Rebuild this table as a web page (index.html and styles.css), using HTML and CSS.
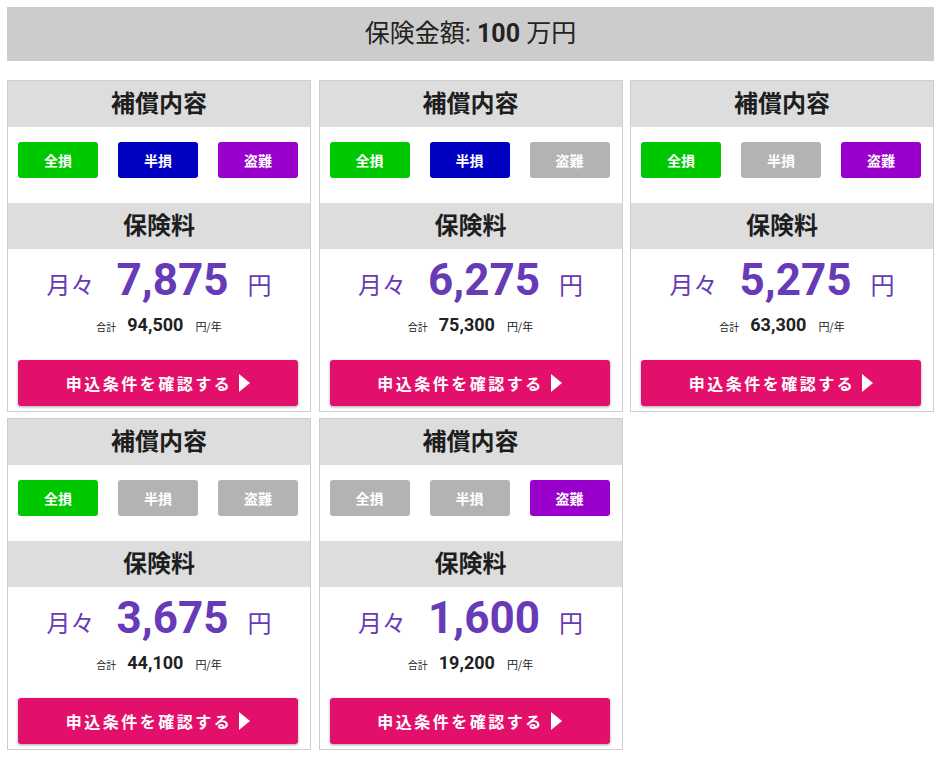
FILE: index.html
```
<!DOCTYPE html>
<html lang="ja">
<head>
<meta charset="utf-8">
<link rel="stylesheet" href="styles.css">
</head>
<body>
<div class="banner">保険金額: <b>100</b> 万円</div>
<div class="grid">
  <div class="card">
    <div class="head">補償内容</div>
    <div class="tags"><span class="tag green">全損</span><span class="tag blue">半損</span><span class="tag purple">盗難</span></div>
    <div class="head">保険料</div>
    <div class="price"><span class="unit">月々</span><span class="num">7,875</span><span class="unit">円</span></div>
    <div class="total"><span class="tl">合計</span><span class="tn">94,500</span><span class="ty">円/年</span></div>
    <div class="ctaw"><a class="cta">申込条件を確認する<i class="tri"></i></a></div>
  </div>
  <div class="card">
    <div class="head">補償内容</div>
    <div class="tags"><span class="tag green">全損</span><span class="tag blue">半損</span><span class="tag off">盗難</span></div>
    <div class="head">保険料</div>
    <div class="price"><span class="unit">月々</span><span class="num">6,275</span><span class="unit">円</span></div>
    <div class="total"><span class="tl">合計</span><span class="tn">75,300</span><span class="ty">円/年</span></div>
    <div class="ctaw"><a class="cta">申込条件を確認する<i class="tri"></i></a></div>
  </div>
  <div class="card">
    <div class="head">補償内容</div>
    <div class="tags"><span class="tag green">全損</span><span class="tag off">半損</span><span class="tag purple">盗難</span></div>
    <div class="head">保険料</div>
    <div class="price"><span class="unit">月々</span><span class="num">5,275</span><span class="unit">円</span></div>
    <div class="total"><span class="tl">合計</span><span class="tn">63,300</span><span class="ty">円/年</span></div>
    <div class="ctaw"><a class="cta">申込条件を確認する<i class="tri"></i></a></div>
  </div>
  <div class="card">
    <div class="head">補償内容</div>
    <div class="tags"><span class="tag green">全損</span><span class="tag off">半損</span><span class="tag off">盗難</span></div>
    <div class="head">保険料</div>
    <div class="price"><span class="unit">月々</span><span class="num">3,675</span><span class="unit">円</span></div>
    <div class="total"><span class="tl">合計</span><span class="tn">44,100</span><span class="ty">円/年</span></div>
    <div class="ctaw"><a class="cta">申込条件を確認する<i class="tri"></i></a></div>
  </div>
  <div class="card">
    <div class="head">補償内容</div>
    <div class="tags"><span class="tag off">全損</span><span class="tag off">半損</span><span class="tag purple">盗難</span></div>
    <div class="head">保険料</div>
    <div class="price"><span class="unit">月々</span><span class="num">1,600</span><span class="unit">円</span></div>
    <div class="total"><span class="tl">合計</span><span class="tn">19,200</span><span class="ty">円/年</span></div>
    <div class="ctaw"><a class="cta">申込条件を確認する<i class="tri"></i></a></div>
  </div>
</div>
</body>
</html>
```

FILE: styles.css
```
* { box-sizing: border-box; }
body {
  margin: 7px;
  background: #fff;
  font-family: Roboto, "Noto Sans CJK JP", sans-serif;
  color: #222;
}
.banner {
  background: #cccccc;
  height: 54px;
  line-height: 54px;
  text-align: center;
  font-family: Roboto, "Noto Sans CJK JP", sans-serif;
  font-size: 25px;
  color: #222;
  margin-bottom: 19px;
  width: 927px;
}
.banner b { font-weight: 700; }
.grid {
  display: grid;
  grid-template-columns: repeat(3, 304px);
  column-gap: 7.5px;
  row-gap: 6px;
  width: 927px;
}
.card {
  border: 1px solid #cfcfcf;
  background: #fff;
}
.head {
  background: #dddddd;
  height: 46px;
  display: flex;
  align-items: center;
  justify-content: center;
  padding-bottom: 5px;
  font-family: "Noto Sans CJK JP", sans-serif;
  font-weight: 700;
  font-size: 24px;
  color: #1e1e1e;
}
.tags {
  display: flex;
  justify-content: space-between;
  padding: 15px 12px 25px 10px;
}
.tag {
  width: 80px;
  height: 36px;
  border-radius: 3px;
  display: flex;
  align-items: center;
  justify-content: center;
  color: #fff;
  font-family: "Noto Sans CJK JP", sans-serif;
  font-weight: 700;
  font-size: 14px;
}
.green { background: #00c800; }
.blue { background: #0000c0; }
.purple { background: #9900cc; }
.off { background: #b3b3b3; }
.price {
  display: flex;
  justify-content: center;
  align-items: center;
  height: 60px;
  color: #673ab7;
  padding-top: 2px;
}
.unit {
  font-family: "Noto Sans CJK JP", sans-serif;
  font-size: 24px;
  font-weight: 400;
  margin-top: 6px;
}
.num {
  font-family: Roboto, sans-serif;
  font-weight: 700;
  font-size: 44px;
  margin: 0 19px 0 22px;
}
.total {
  display: flex;
  justify-content: center;
  align-items: baseline;
  height: 32px;
  padding-top: 5px;
  color: #222;
}
.tl { font-family: "Noto Sans CJK JP", sans-serif; font-size: 10px; }
.tn { font-family: Roboto, sans-serif; font-weight: 700; font-size: 18px; margin: 0 12px 0 11px; }
.ty { font-family: "Noto Sans CJK JP", sans-serif; font-size: 11px; }
.ctaw { padding: 19px 12px 5px 10px; }
.cta {
  display: flex;
  align-items: center;
  justify-content: center;
  height: 46px;
  background: #e3106b;
  border-radius: 3px;
  box-shadow: 0 1px 3px rgba(0,0,0,0.35);
  color: #fff;
  font-family: "Noto Sans CJK JP", sans-serif;
  font-weight: 700;
  font-size: 16px;
  letter-spacing: 2.5px;
}
.tri {
  display: inline-block;
  width: 0;
  height: 0;
  border-top: 9px solid transparent;
  border-bottom: 9px solid transparent;
  border-left: 11px solid #fff;
  margin-left: 7px;
}
```
